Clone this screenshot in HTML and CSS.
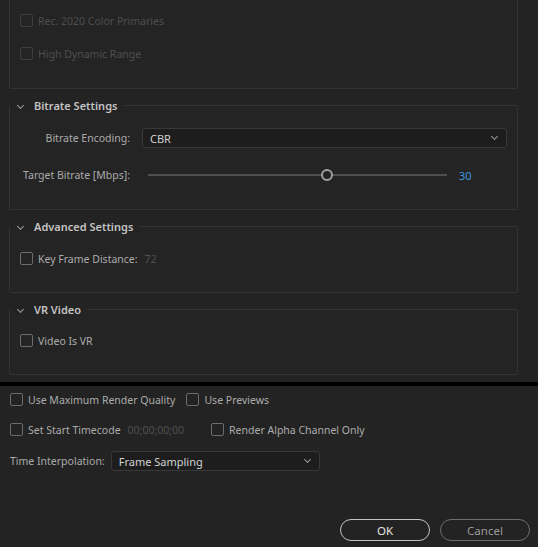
FILE: index.html
```html
<!DOCTYPE html>
<html>
<head>
<meta charset="utf-8">
<link rel="stylesheet" href="styles.css">
</head>
<body>
<div class="dialog">
  <div class="pane">
    <div class="group group-cut">
      <label class="check disabled"><span class="box"></span><span>Rec. 2020 Color Primaries</span></label>
      <label class="check disabled"><span class="box"></span><span>High Dynamic Range</span></label>
    </div>

    <fieldset class="group">
      <legend><span class="chev"></span><span class="ltext">Bitrate Settings</span></legend>
      <div class="form-grid">
        <span class="lbl">Bitrate Encoding:</span>
        <div class="select wide"><span>CBR</span><span class="chev"></span></div>
        <span class="lbl">Target Bitrate [Mbps]:</span>
        <div class="slider-row">
          <div class="slider"><div class="track"><div class="thumb" style="left: 60%"></div></div></div>
          <span class="value">30</span>
        </div>
      </div>
    </fieldset>

    <fieldset class="group adv">
      <legend><span class="chev"></span><span class="ltext">Advanced Settings</span></legend>
      <label class="check"><span class="box"></span><span>Key Frame Distance:</span><span class="dim num">72</span></label>
    </fieldset>

    <fieldset class="group vr">
      <legend><span class="chev"></span><span class="ltext">VR Video</span></legend>
      <label class="check"><span class="box"></span><span>Video Is VR</span></label>
    </fieldset>
  </div>

  <div class="divider"></div>

  <div class="footer">
    <div class="row r1">
      <label class="check"><span class="box"></span><span>Use Maximum Render Quality</span></label>
      <label class="check"><span class="box"></span><span>Use Previews</span></label>
    </div>
    <div class="row r2">
      <label class="check"><span class="box"></span><span>Set Start Timecode</span><span class="dim tc">00;00;00;00</span></label>
      <label class="check"><span class="box"></span><span>Render Alpha Channel Only</span></label>
    </div>
    <div class="row r3">
      <span class="lbl">Time Interpolation:</span>
      <div class="select interp"><span>Frame Sampling</span><span class="chev"></span></div>
    </div>
    <div class="buttons">
      <button class="btn ok">OK</button>
      <button class="btn cancel">Cancel</button>
    </div>
  </div>
</div>
</body>
</html>
```
FILE: styles.css
```css
* { box-sizing: border-box; }
html, body { margin: 0; padding: 0; }
body {
  background: #232323;
  font-family: "Noto Sans", "Open Sans", sans-serif;
  font-size: 10.5px;
  color: #ababab;
  width: 538px;
  height: 547px;
  overflow: hidden;
}
.dialog { width: 538px; }
.pane {
  height: 382px;
  padding: 0 20px 0 9px;
  overflow: hidden;
}
.group {
  margin: 8px 0 0 0;
  padding: 0 10px;
  border: 1px solid #333;
  border-radius: 2px;
  background: #242424;
  min-width: 0;
}
.group-cut {
  margin-top: 0;
  border-top: none;
  border-radius: 0 0 2px 2px;
  height: 89px;
  padding-top: 12px;
  display: flex;
  flex-direction: column;
  gap: 16px;
}
legend {
  height: 16px;
  line-height: 16px;
  padding: 0 6px 0 0;
  margin-left: -10px;
  font-size: 11px;
  font-weight: 600;
  color: #c4c4c4;
  display: flex;
  align-items: center;
  background: #232323;
}
legend .ltext { position: relative; top: 1px; }
legend .chev { margin: 0 11px 0 8px; }
.chev {
  display: inline-block;
  width: 5px;
  height: 5px;
  border-right: 1px solid #9a9a9a;
  border-bottom: 1px solid #9a9a9a;
  transform: rotate(45deg);
  margin-top: -3px;
}
.check {
  display: flex;
  align-items: center;
  height: 17px;
  white-space: nowrap;
}
.box {
  width: 13px;
  height: 13px;
  border: 1.5px solid #6c6c6c;
  border-radius: 2px;
  margin-right: 5px;
  flex: none;
}
.disabled { color: #4e4e4e; }
.disabled .box { border-color: #3e3e3e; }
.dim { color: #505050; }
.num { margin-left: 7px; }
.tc { margin-left: 7px; }

.form-grid {
  display: grid;
  grid-template-columns: 110px 1fr;
  column-gap: 12px;
  row-gap: 16px;
  padding: 15px 0 24px 0;
  align-items: center;
}
.lbl { text-align: right; white-space: nowrap; }
.select {
  height: 20px;
  background: #1d1d1d;
  border: 1px solid #383838;
  border-radius: 3px;
  display: flex;
  align-items: center;
  justify-content: space-between;
  padding: 0 7px 0 7px;
  color: #d2d2d2;
  font-size: 11px;
}
.select .chev { width: 5px; height: 5px; margin-right: 2px; }
.wide { width: 365px; }
.slider-row {
  height: 20px;
  margin-top: 1px;
  display: flex;
  align-items: center;
}
.slider {
  width: 311px;
  height: 20px;
  padding: 0 6px;
  display: flex;
  align-items: center;
}
.track { position: relative; height: 2px; background: #4f4f4f; width: 100%; }
.thumb {
  position: absolute;
  top: -5px;
  margin-left: -6px;
  width: 12px;
  height: 12px;
  border: 2px solid #a0a0a0;
  border-radius: 50%;
  background: #232323;
}
.value { margin-left: 6px; color: #3a97dd; font-size: 11px; }

.adv .check { margin: 16px 0 25px 0; }
.vr .check { margin: 15px 0 25px 0; }

.divider { height: 4px; background: #000; }

.footer {
  padding: 0 8px 0 10px;
  height: 161px;
  display: flex;
  flex-direction: column;
}
.row { display: flex; align-items: center; }
.r1 { margin-top: 5px; height: 17px; }
.r1 .check + .check { margin-left: 11px; }
.r2 { margin-top: 13px; height: 17px; }
.r2 .check + .check { margin-left: 27px; }
.r3 { margin-top: 13px; height: 20px; }
.r3 .lbl { margin-right: 6px; }
.interp { width: 209px; padding-left: 7px; }
.buttons {
  margin-top: auto;
  margin-bottom: 6px;
  display: flex;
  justify-content: flex-end;
  gap: 10px;
}
.btn {
  width: 90px;
  height: 22px;
  border-radius: 11px;
  background: transparent;
  font-family: inherit;
  font-size: 11.5px;
  padding: 0;
}
.ok { border: 1.5px solid #c4c4c4; color: #e6e6e6; }
.cancel { border: 1.5px solid #6e6e6e; color: #9a9a9a; }
```
